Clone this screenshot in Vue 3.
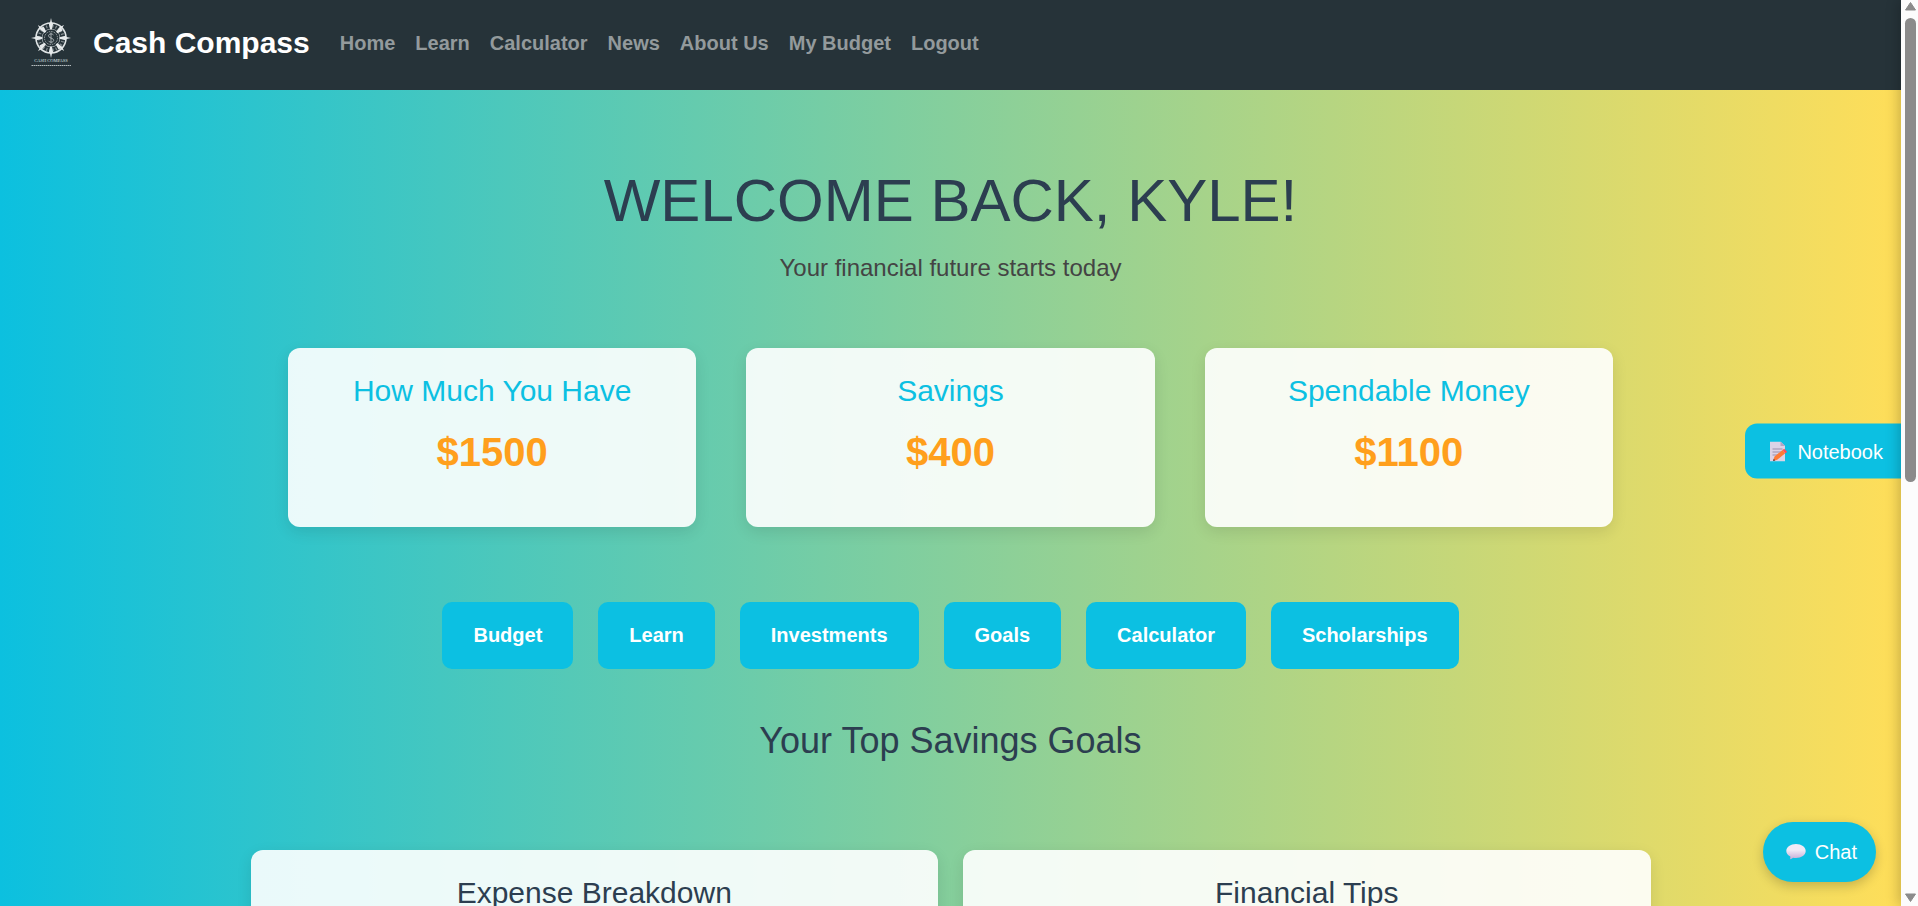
<script setup>
const navLinks = ['Home', 'Learn', 'Calculator', 'News', 'About Us', 'My Budget', 'Logout']
const balances = [
  { title: 'How Much You Have', amount: '$1500' },
  { title: 'Savings', amount: '$400' },
  { title: 'Spendable Money', amount: '$1100' },
]
const actions = ['Budget', 'Learn', 'Investments', 'Goals', 'Calculator', 'Scholarships']
const panels = ['Expense Breakdown', 'Financial Tips']
const spokes = [0, 45, 90, 135, 180, 225, 270, 315]
</script>

<template>
  <div class="shell">
    <div class="page">
      <header class="navbar">
        <a href="#" class="brand">
          <svg class="logo" viewBox="0 0 42 50" aria-hidden="true">
            <g fill="none" stroke="#dfe4e5">
              <circle cx="20" cy="20" r="15" stroke-width="1.6" />
              <circle cx="20" cy="20" r="12" stroke-width="3" stroke-dasharray="1.2 2" opacity="0.5" />
              <circle cx="20" cy="20" r="9" stroke-width="0.8" opacity="0.7" />
              <circle cx="20" cy="20" r="6.5" stroke-width="1" stroke-dasharray="1.5 1" opacity="0.6" />
              <path d="M22.500 17c-1-1.500-5-1.500-5 .8 0 2.700 5.200 2 5.200 4.400 0 2.500-4 2.500-5.400.6M20 14.500v11" stroke-width="0.9" opacity="0.7" />
            </g>
            <g fill="#e6eaeb">
              <path
                v-for="angle in spokes"
                :key="angle"
                :transform="`rotate(${angle} 20 20)`"
                :d="angle % 90 ? 'M20 1.500l1 4.500 1.800.5-1.500 5.500h-2.200l-.8-6z' : 'M20 0l1 4.500 1.200 1-1.400 6h-1.600l-1.400-6 1.200-1z'"
              />
            </g>
            <text class="logo-name" x="20" y="44" text-anchor="middle">CASH COMPASS</text>
            <path d="M.5 47.500h40" stroke="#b3bbbd" stroke-width="1.200" stroke-dasharray="1.500 .5" />
          </svg>
          <span>Cash Compass</span>
        </a>
        <nav class="nav-links">
          <a v-for="link in navLinks" :key="link" href="#">{{ link }}</a>
        </nav>
      </header>

      <main>
        <h1>WELCOME BACK, KYLE!</h1>
        <p class="subtitle">Your financial future starts today</p>

        <section class="balances">
          <article v-for="item in balances" :key="item.title" class="card balance">
            <h2>{{ item.title }}</h2>
            <p>{{ item.amount }}</p>
          </article>
        </section>

        <div class="actions">
          <button v-for="action in actions" :key="action" type="button">{{ action }}</button>
        </div>

        <h2 class="goals-title">Your Top Savings Goals</h2>

        <section class="panels">
          <article v-for="panel in panels" :key="panel" class="card panel">
            <h2>{{ panel }}</h2>
          </article>
        </section>
      </main>

      <button type="button" class="notebook">
        <svg width="18" height="20" viewBox="0 0 18 20" aria-hidden="true">
          <path d="M0 0h10.500l4.500 4.500V20H0z" fill="#dcd3e6" />
          <path d="M10.500 0v4.500H15z" fill="#b3a5c4" />
          <path d="M2.500 7.500h10M2.500 10.500h9M2.500 13.500h6" stroke="#9b8fac" stroke-width="1" />
          <path d="M3 19.500l1.500-4.500 8-6.500 2.700 3.300-8 6.500z" fill="#ff7b35" />
          <path d="M12.500 8.500l1.800-1.300 2.900 3.300-2 1.300z" fill="#ff4f58" />
          <path d="M3 19.500l.8-2.300 1.500 1.700z" fill="#4b3d45" />
        </svg>
        Notebook
      </button>
      <button type="button" class="chat">
        <svg width="20" height="16" viewBox="0 0 20 16" aria-hidden="true">
          <defs>
            <linearGradient id="bubble" x1="0" y1="0" x2="0" y2="1">
              <stop offset="0.400" stop-color="#f1eaf6" />
              <stop offset="1" stop-color="#c6acd7" />
            </linearGradient>
          </defs>
          <path d="M10 0c5.500 0 9.700 3 9.700 7s-4.200 7-9.700 7c-1 0-2-.1-3-.3-.8.8-1.700 1.300-3 1.500.4-.8.500-1.700.3-2.600C2 11.400.3 9.400.3 7c0-4 4.200-7 9.700-7z" fill="url(#bubble)" />
        </svg>
        Chat
      </button>
      <div class="drawer"></div>
    </div>

    <div class="scrollbar" aria-hidden="true">
      <svg width="13" height="10" viewBox="0 0 13 10"><path d="M6.500 1.500L11.500 9h-10z" fill="#8b8b8b" stroke="#8b8b8b" stroke-linejoin="round" /></svg>
      <div class="track"><div class="thumb"></div></div>
      <svg width="13" height="10" viewBox="0 0 13 10"><path d="M6.500 8.500L11.500 1h-10z" fill="#8b8b8b" stroke="#8b8b8b" stroke-linejoin="round" /></svg>
    </div>
  </div>
</template>

<style>
body {
  margin: 0;
  overflow: hidden;
}
</style>

<style scoped>
.shell {
  display: grid;
  grid-template-columns: minmax(0, 1fr) 17px;
  height: 100vh;
  font-family: "Liberation Sans", Arial, sans-serif;
  font-size: 20px;
  line-height: 30px;
}
.page {
  position: relative;
  overflow: hidden;
  background: linear-gradient(to right, #0cc0df, #ffde59);
}
h1, h2, p {
  margin: 0;
  font-weight: 400;
}
button {
  border: 0;
  font: inherit;
  color: #fff;
  background: #0cc0e2;
  cursor: pointer;
}
.navbar {
  display: flex;
  align-items: center;
  gap: 30px;
  height: 86px;
  padding: 0 31px 4px;
  background: #263339;
}
.brand {
  display: flex;
  align-items: center;
  gap: 20px;
  color: #fff;
  font-size: 30px;
  font-weight: 700;
  text-decoration: none;
}
.logo {
  width: 42px;
  height: 50px;
}
.logo-name {
  font: 4.5px "Liberation Serif", serif;
  fill: #dfe4e5;
}
.nav-links {
  display: flex;
  gap: 20px;
}
.nav-links a {
  color: #939a9c;
  font-weight: 700;
  text-decoration: none;
}
main {
  display: flex;
  flex-direction: column;
  align-items: center;
  padding: 75px 25px 0;
  text-align: center;
  color: #2c3e50;
}
h1 {
  font-size: 60px;
  line-height: 72px;
}
.subtitle {
  margin-top: 13px;
  font-size: 24px;
  line-height: 36px;
  color: #444;
}
.card {
  border-radius: 12px;
  padding: 25px;
  background: rgba(255, 255, 255, 0.9);
  box-shadow: 0 5px 15px rgba(0, 0, 0, 0.1);
}
.card h2 {
  font-size: 30px;
  line-height: 36px;
}
.balances {
  display: grid;
  grid-template-columns: repeat(3, 1fr);
  gap: 50px;
  width: 100%;
  max-width: 1325px;
  margin-top: 62px;
}
.balance {
  padding-bottom: 45px;
}
.balance h2 {
  color: #0cc0e2;
}
.balance p {
  margin-top: 13px;
  font-size: 40px;
  font-weight: 700;
  line-height: 60px;
  color: #ff9f1c;
}
.actions {
  display: flex;
  flex-wrap: wrap;
  justify-content: center;
  gap: 25px;
  margin-top: 75px;
}
.actions button {
  padding: 18px 31px 19px;
  border-radius: 10px;
  font-weight: 700;
}
.goals-title {
  margin-top: 50px;
  font-size: 36px;
  line-height: 44px;
}
.panels {
  display: grid;
  grid-template-columns: 1fr 1fr;
  gap: 25px;
  width: 100%;
  max-width: 1400px;
  margin-top: 87px;
}
.panel {
  min-height: 300px;
}
.notebook,
.chat {
  position: absolute;
  display: flex;
  align-items: center;
  gap: 9px;
}
.notebook {
  top: 451px;
  right: 0;
  transform: translateY(-50%);
  padding: 13px 18px 12px 25px;
  border-radius: 12px 0 0 12px;
}
.chat {
  right: 25px;
  bottom: 24px;
  padding: 15px 19px 15px 23px;
  border-radius: 30px;
  box-shadow: 0 4px 12px rgba(0, 0, 0, 0.2);
}
.drawer {
  position: absolute;
  top: 0;
  bottom: 0;
  left: 100%;
  width: 300px;
  box-shadow: -3px 0 12px rgba(0, 0, 0, 0.2);
}
.scrollbar {
  display: flex;
  flex-direction: column;
  align-items: center;
  gap: 7px;
  padding: 1px 0 3px 1px;
  background: #fcfcfc;
}
.track {
  flex: 1;
  width: 11px;
}
.thumb {
  height: 53.5%;
  border-radius: 6px;
  background: #8b8b8b;
}
</style>
